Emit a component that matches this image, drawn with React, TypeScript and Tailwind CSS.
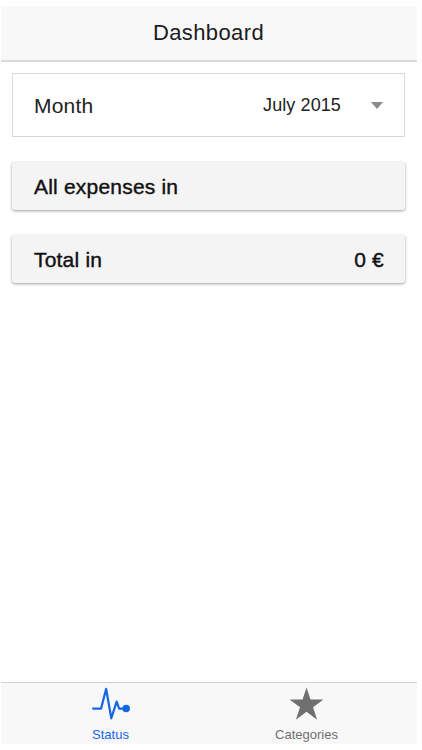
import type { ReactNode } from 'react';

function PulseIcon() {
  return (
    <svg width="40" height="36" viewBox="0 0 40 36" fill="none" className="block">
      <path
        d="M1.6 23.2H9.8L15 3L20.3 33.2L25.8 16L28.4 23.2H34"
        stroke="currentColor"
        strokeWidth="2.3"
        strokeLinejoin="round"
        strokeLinecap="round"
      />
      <circle cx="35.6" cy="23.2" r="3.9" fill="currentColor" />
    </svg>
  );
}

function StarIcon() {
  return (
    <svg width="36" height="36" viewBox="0 0 36 36" className="block">
      <path
        d="M17.5 1.6L21.6 14H34.9L24.2 21.8L28.4 34.6L17.5 26.6L6.6 34.6L10.8 21.8L0.1 14H13.4Z"
        fill="currentColor"
      />
    </svg>
  );
}

function Panel({ title, value }: { title: string; value?: string }) {
  return (
    <div className="flex h-12 items-center justify-between rounded-[3px] bg-[#f4f4f4] pl-[22px] pr-[21px] pt-[2px] text-[21px] tracking-[0.2px] text-[#111] shadow-[0_1px_3px_rgba(0,0,0,0.38)] [-webkit-text-stroke:0.4px_#111]">
      <span>{title}</span>
      {value && <span>{value}</span>}
    </div>
  );
}

function Tab({ label, active, children }: { label: string; active?: boolean; children: ReactNode }) {
  return (
    <button
      className={`flex w-[196px] flex-col items-center pt-[3px] text-[13px] leading-[18px] ${
        active ? 'text-[#1766e2]' : 'text-[#6f6f6f]'
      }`}
    >
      {children}
      <span className="mt-[5px]">{label}</span>
    </button>
  );
}

export default function App() {
  return (
    <div className="h-[750px] w-[422px] bg-white pb-[6px] pl-[1px] pr-[5px] pt-[6px] font-['Liberation_Sans',Arial,sans-serif]">
      <div className="flex h-full flex-col">
        <header className="flex h-[56px] items-center justify-center border-b-2 border-[#dadada] bg-[#f8f8f8] pb-[2px] pr-[1px]">
          <h1 className="text-[22px] tracking-[0.4px] text-[#1c1c1c]">Dashboard</h1>
        </header>

        <main className="flex flex-1 flex-col pl-[11px] pr-[12px] pt-[11px]">
          <div className="flex h-[64px] items-center justify-between border border-[#d8d8d8] pl-[21px] pr-[21px] text-[#222]">
            <span className="pt-[2px] text-[21px] tracking-[0.2px]">Month</span>
            <div className="flex items-center">
              <span className="text-[18px] tracking-[0.1px]">July 2015</span>
              <svg width="12" height="7" viewBox="0 0 12 7" className="ml-[30px]">
                <path d="M0 0H12L6 7Z" fill="#8c8c8c" />
              </svg>
            </div>
          </div>

          <div className="mt-[25px] flex flex-col gap-[25px]">
            <Panel title="All expenses in" />
            <Panel title="Total in" value="0 €" />
          </div>
        </main>

        <nav className="flex h-[62px] justify-center border-t border-[#d0d0d0] bg-[#f8f8f8] pr-[1px]">
          <Tab label="Status" active>
            <PulseIcon />
          </Tab>
          <Tab label="Categories">
            <StarIcon />
          </Tab>
        </nav>
      </div>
    </div>
  );
}
